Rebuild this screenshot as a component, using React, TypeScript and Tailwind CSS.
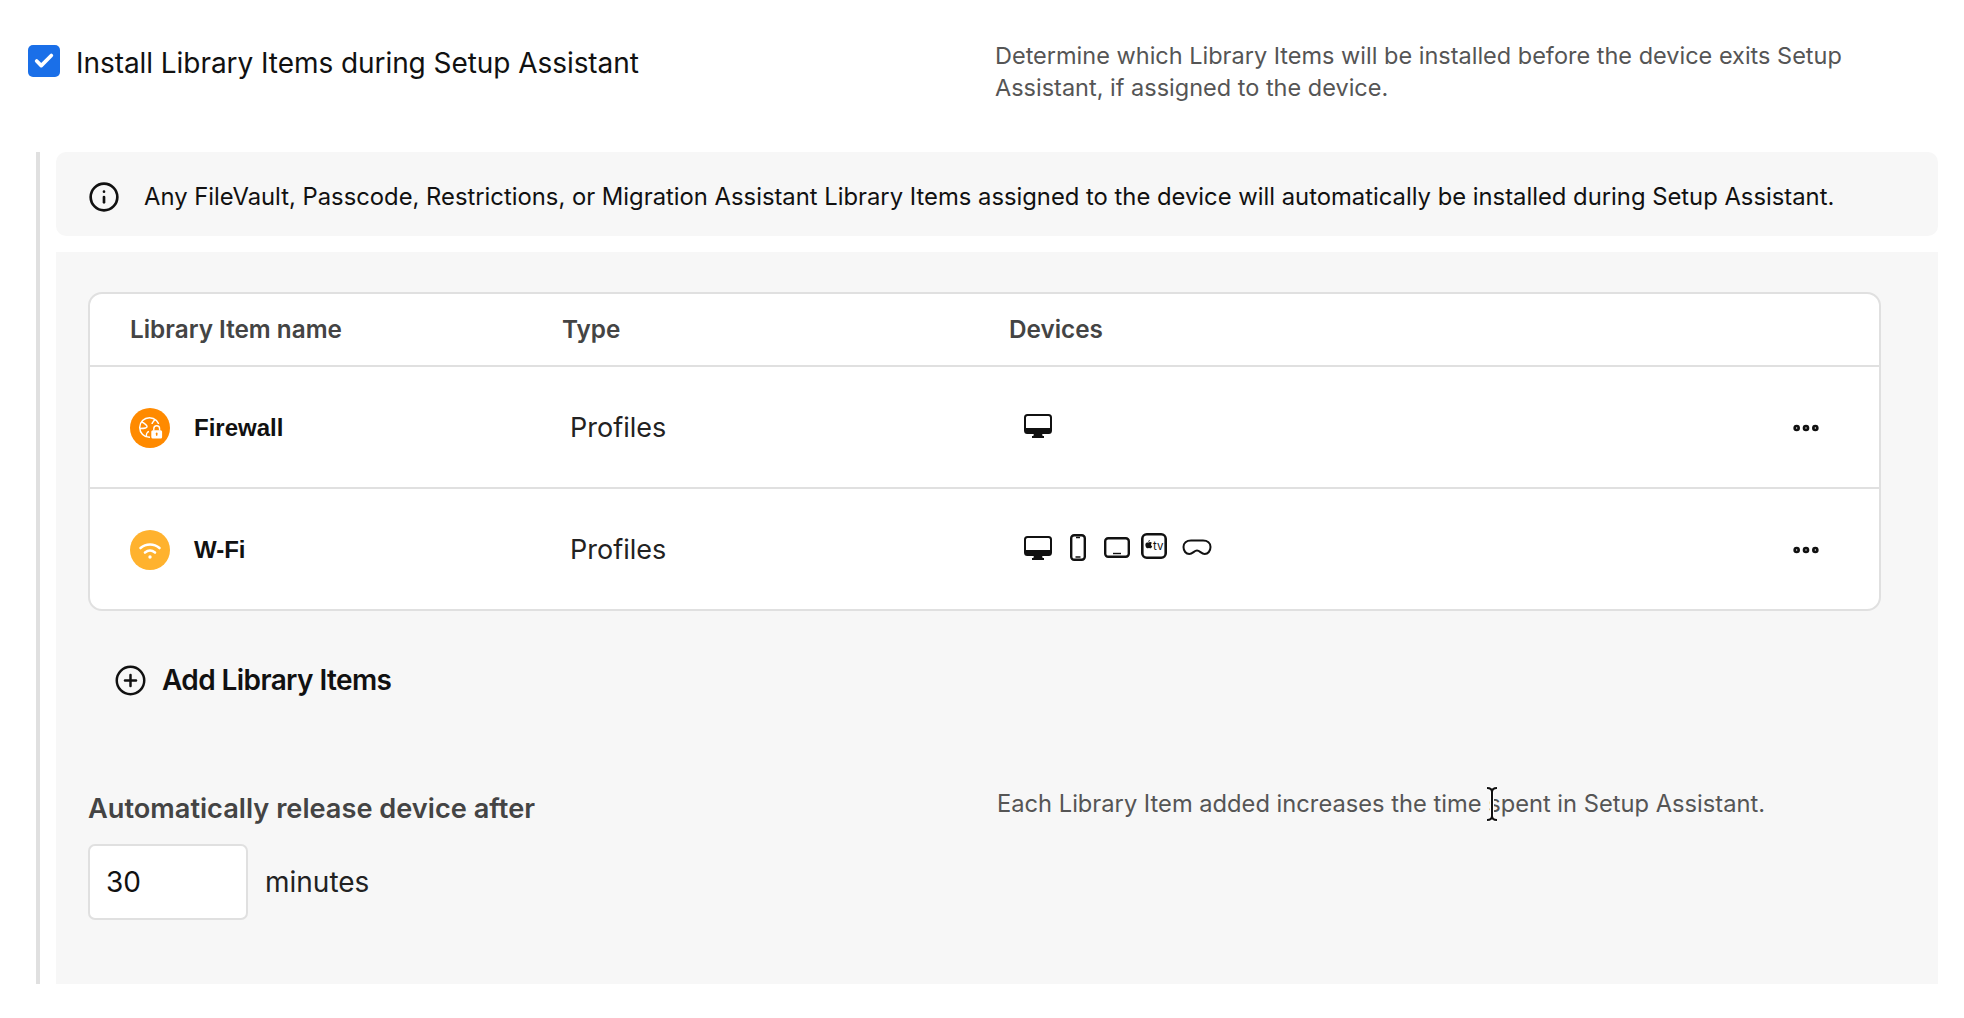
import { Check, Ellipsis, Info, CirclePlus } from "lucide-react"

const font = "font-['Inter','Liberation_Sans',sans-serif]"

function Monitor() {
  return (
    <svg width="28" height="24" viewBox="0 0 28 24" className="block">
      <rect x="1" y="1" width="26" height="18" rx="2.5" fill="none" stroke="#111" strokeWidth="2" />
      <path d="M1 14h26v3a2.5 2.5 0 0 1-2.5 2.5h-21A2.5 2.5 0 0 1 1 17z" fill="#111" />
      <path d="M10 19h8l.6 3H20v2H8v-2h1.400z" fill="#111" />
    </svg>
  )
}

function Phone() {
  return (
    <svg width="16" height="27" viewBox="0 0 16 27" className="block">
      <rect x="1.200" y="1.200" width="13.600" height="24.600" rx="3" fill="none" stroke="#111" strokeWidth="2.400" />
      <path d="M6 3.500h4M5.500 23h5" stroke="#111" strokeWidth="1.400" />
    </svg>
  )
}

function Tablet() {
  return (
    <svg width="26" height="21" viewBox="0 0 26 21" className="block">
      <rect x="1.200" y="1.200" width="23.600" height="18.600" rx="3" fill="none" stroke="#111" strokeWidth="2.400" />
      <path d="M9 16.500h8" stroke="#111" strokeWidth="1.400" />
    </svg>
  )
}

function AppleTv() {
  return (
    <svg width="26" height="26" viewBox="0 0 26 26" className="block">
      <rect x="1.300" y="1.300" width="23.400" height="23.400" rx="4.500" fill="none" stroke="#111" strokeWidth="2.600" />
      <path d="M7.300 9.600c.9 0 1.400-.6 2-.5.700 0 1.200.3 1.600.8-1.300.9-1.100 2.700.3 3.300-.4 1-1 2.100-1.800 2.100-.6 0-.8-.4-1.500-.4s-1 .4-1.500.4c-1 0-2.300-2.100-2-4 .2-1.200 1.200-1.900 2.900-1.700zM7.300 9c0-1 .7-1.800 1.600-1.900 0 1-.7 1.900-1.600 1.900z" fill="#111" />
      <text x="12" y="16.500" fontSize="11.500" fill="#111" fontFamily="Inter, sans-serif">tv</text>
    </svg>
  )
}

function Vision() {
  return (
    <svg width="30" height="17" viewBox="0 0 30 17" className="block">
      <path d="M9 1.500h12c4.500 0 7.500 2.500 7.500 6.500 0 4-2.500 7-5.800 7-3.500 0-4.800-3.500-7.700-3.500S10.800 15 7.300 15C4 15 1.500 12 1.500 8c0-4 3-6.500 7.500-6.500z" fill="none" stroke="#111" strokeWidth="2" />
    </svg>
  )
}

function FirewallIcon() {
  return (
    <div className="flex h-10 w-10 shrink-0 items-center justify-center rounded-full bg-[#ff8a00]">
      <svg width="28" height="28" viewBox="0 0 28 28" fill="none" stroke="#fff" strokeWidth="1.500">
        <circle cx="13.500" cy="13.500" r="9.800" />
        <path d="M6 8c2.500 1 3 2 4.500 3.500 1 1 .5 2-1 2.500-1.500.5-3 .5-5.500.5M19 5.500c-1.500 2-3.500 3-3 5.500.3 1.500 2 1.500 7.200 1.500M10.500 23c-.5-2.500.5-5 2.500-5.500" />
        <rect x="14" y="10" width="14" height="16" fill="#ff8a00" stroke="none" />
        <path d="M17.800 16.500v-1.800a2.900 2.900 0 0 1 5.800 0v1.800" strokeWidth="1.400" />
        <rect x="15.300" y="16.300" width="10.800" height="8.200" rx="1.500" fill="#fff" stroke="none" />
        <rect x="19.900" y="18.500" width="1.600" height="3.400" rx=".8" fill="#ff8a00" stroke="none" />
      </svg>
    </div>
  )
}

function WifiIcon() {
  return (
    <div className="flex h-10 w-10 shrink-0 items-center justify-center rounded-full bg-[#ffb22e]">
      <svg width="24" height="24" viewBox="0 0 24 24" fill="none" stroke="#fff" strokeWidth="2.600" strokeLinecap="round">
        <path d="M2.500 10c5.500-4.700 13.500-4.700 19 0M7 14.500c3-2.400 7-2.400 10 0" />
        <circle cx="12" cy="19" r="1.700" fill="#fff" stroke="none" />
      </svg>
    </div>
  )
}

function Row({ icon, name, last, devices }: { icon: React.ReactNode; name: string; last?: boolean; devices: React.ReactNode }) {
  return (
    <div className={`flex items-center pl-[40px] pr-[57px] pt-[1px] ${last ? "h-[120px]" : "h-[122px] border-b-2 border-[#e0e0e0]"}`}>
      <div className="flex w-[440px] items-center gap-[24px]">
        {icon}
        <span className="font-['Liberation_Sans',sans-serif] text-[24px] font-bold text-[#111]">{name}</span>
      </div>
      <div className="w-[454px] pt-[1px] text-[27px] text-[#222]">Profiles</div>
      <div className="flex flex-1 items-center pb-[4px]">{devices}</div>
      <Ellipsis className="h-[32px] w-[32px] text-[#111]" strokeWidth={3} />
    </div>
  )
}

export default function App() {
  return (
    <div className={`relative h-[1018px] w-[1964px] bg-white ${font}`}>
      <div className="flex h-[152px] pl-[28px] pt-[45px]">
        <div className="flex w-[967px] items-start gap-[16px]">
          <div className="flex h-[32px] w-[32px] items-center justify-center rounded-[5px] bg-[#1a6fe8]">
            <Check className="h-[22px] w-[22px] text-white" strokeWidth={4} />
          </div>
          <span className="text-[28px] leading-[36px] tracking-[-0.06px] text-[#111]">Install Library Items during Setup Assistant</span>
        </div>
        <p className="-mt-[5px] w-[930px] text-[23.500px] leading-[32px] text-[#555]">
          Determine which Library Items will be installed before the device exits Setup Assistant, if assigned to the device.
        </p>
      </div>

      <div className="ml-[36px] mr-[26px] border-l-4 border-[#e0e0e0] pl-[16px]">
        <div className="flex h-[84px] items-center gap-[24px] rounded-[10px] bg-[#f7f7f7] pl-[32px] pt-[5px]">
          <Info className="h-[32px] w-[32px] text-[#111]" strokeWidth={2} />
          <span className="text-[23.800px] text-[#111]">
            Any FileVault, Passcode, Restrictions, or Migration Assistant Library Items assigned to the device will automatically be installed during Setup Assistant.
          </span>
        </div>

        <div className="mt-[16px] h-[732px] bg-[#f7f7f7] pl-[32px] pr-[57px] pt-[40px]">
          <div className="rounded-[14px] border-2 border-[#e0e0e0] bg-white">
            <div className="flex h-[73px] items-center border-b-2 border-[#e0e0e0] pl-[40px] text-[24.300px] font-semibold text-[#444]">
              <span className="w-[432px]">Library Item name</span>
              <span className="w-[447px]">Type</span>
              <span>Devices</span>
            </div>
            <Row icon={<FirewallIcon />} name="Firewall" devices={<Monitor />} />
            <Row
              icon={<WifiIcon />}
              name="W-Fi"
              last
              devices={
                <div className="flex items-center gap-[18px]">
                  <Monitor />
                  <Phone />
                  <Tablet />
                  <div className="-ml-[7px] -mt-[4px]"><AppleTv /></div>
                  <div className="-ml-[3px]"><Vision /></div>
                </div>
              }
            />
          </div>

          <div className="mt-[48px] flex items-center gap-[15px] pl-[26px]">
            <CirclePlus className="h-[33px] w-[33px] text-[#111]" strokeWidth={1.800} />
            <span className="text-[28px] font-semibold tracking-[-0.6px] text-[#111]">Add Library Items</span>
          </div>

          <div className="mt-[88px] flex">
            <div className="w-[909px]">
              <div className="text-[27.200px] font-semibold text-[#444]">Automatically release device after</div>
              <div className="mt-[14px] flex items-center gap-[17px]">
                <div className="flex h-[76px] w-[160px] items-center rounded-[7px] border-2 border-[#e0e0e0] bg-white pl-[16px] text-[28px] text-[#111]">30</div>
                <span className="text-[28px] text-[#222]">minutes</span>
              </div>
            </div>
            <div className="-mt-[3px] text-[23.700px] text-[#555]">Each Library Item added increases the time spent in Setup Assistant.</div>
          </div>
        </div>
      </div>

      <svg width="14" height="36" viewBox="0 0 14 36" className="absolute left-[1485px] top-[786px]" fill="none">
        <path d="M2 2c3 0 5 1 5 4v24c0 3-2 4-5 4M12 2c-3 0-5 1-5 4v24c0 3 2 4 5 4" stroke="#fff" strokeWidth="4" />
        <path d="M2 2c3 0 5 1 5 4v24c0 3-2 4-5 4M12 2c-3 0-5 1-5 4v24c0 3 2 4 5 4" stroke="#111" strokeWidth="2" />
      </svg>
    </div>
  )
}
